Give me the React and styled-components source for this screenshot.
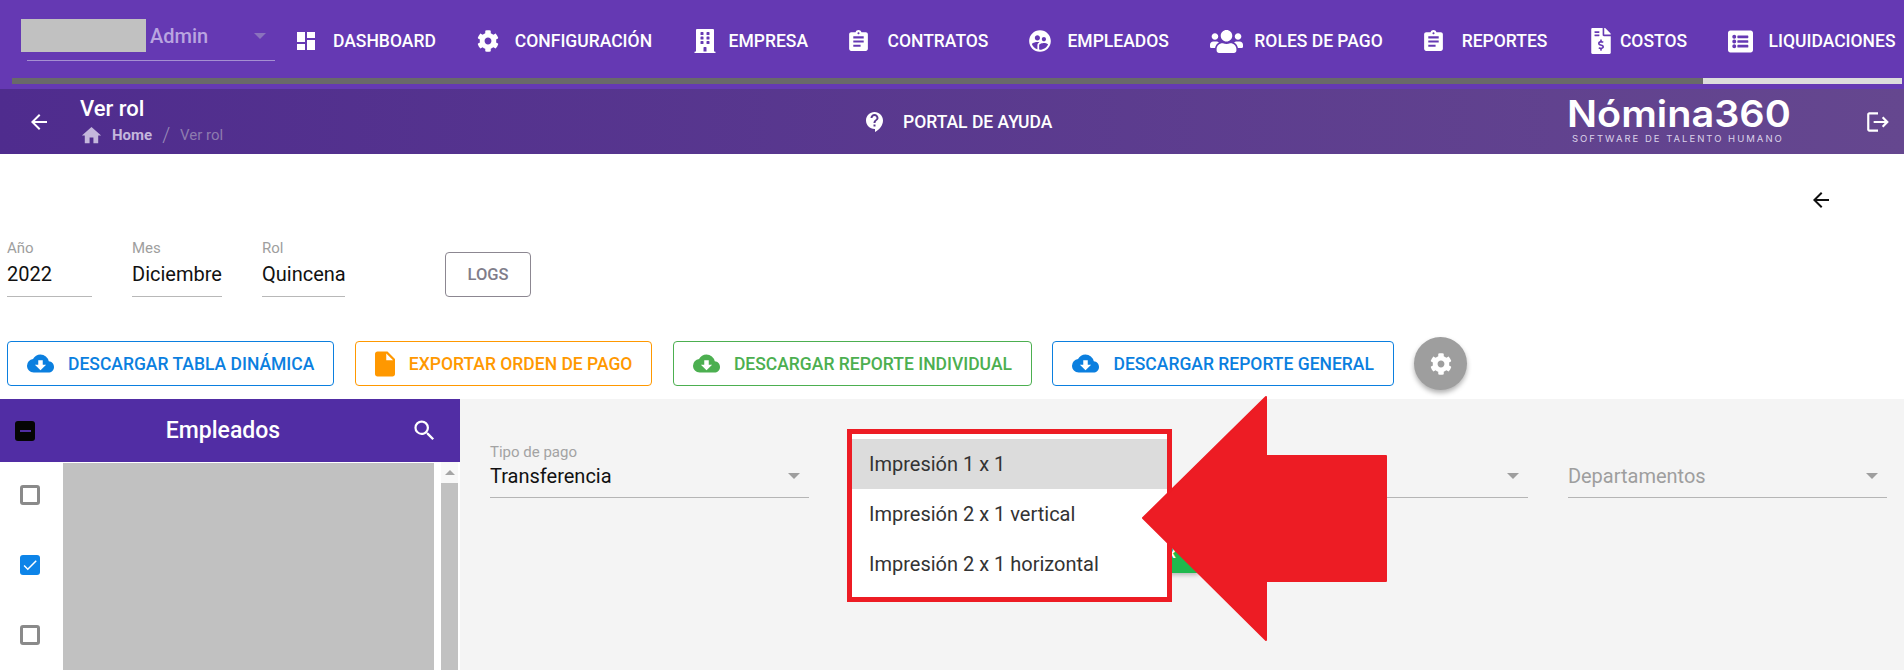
import React from 'react';
import styled, { createGlobalStyle } from 'styled-components';
import {
  MdDashboard, MdAssignment, MdSupervisedUserCircle, MdContactSupport, MdLogout,
  MdArrowBack, MdHome, MdCloudDownload, MdInsertDriveFile, MdSearch, MdCheck,
} from 'react-icons/md';
import { FaCog, FaBuilding, FaUsers, FaFileInvoiceDollar, FaListAlt } from 'react-icons/fa';

const GlobalStyle = createGlobalStyle`
  html, body { margin: 0; padding: 0; background: #fff; }
  body { font-family: Roboto, "Liberation Sans", sans-serif; overflow: hidden; }
  * { box-sizing: border-box; }
`;

const Page = styled.div`
  position: relative;
  width: 1904px;
  height: 670px;
  overflow: hidden;
  display: flex;
  flex-direction: column;
`;

// Top nav
const TopBar = styled.header`
  height: 89px;
  background: #6539b3;
  display: flex;
  flex-direction: column;
`;

const NavRow = styled.nav`
  height: 78px;
  display: flex;
  align-items: center;
  padding-top: 4px;
  white-space: nowrap;
`;

const Brand = styled.div`
  width: 296px;
  padding: 15px 0 0 21px;
  flex: none;
  align-self: flex-start;
`;

const BrandTop = styled.div`
  display: flex;
  align-items: center;
  height: 33px;
`;

const Redacted = styled.div`
  width: 125px;
  height: 33px;
  background: #c1c1c1;
`;

const AdminName = styled.span`
  margin-left: 4px;
  font-size: 20px;
  font-weight: 500;
  color: #b9a5e0;
  width: 104px;
`;

const SmallCaret = styled.span`
  width: 0;
  height: 0;
  border-left: 6px solid transparent;
  border-right: 6px solid transparent;
  border-top: 6px solid ${p => p.$color};
`;

const BrandLine = styled.div`
  margin: 8px 0 0 6px;
  width: 248px;
  height: 1px;
  background: #a58fd2;
`;

const NavItems = styled.div`
  display: flex;
  align-items: center;
  gap: 41px;
`;

const NavItem = styled.a`
  display: flex;
  align-items: center;
  color: #fff;
  font-size: 17.5px;
  font-weight: 500;
`;

const IconSlot = styled.span`
  display: flex;
  align-items: center;
  width: ${p => p.$w}px;
  flex: none;
`;

const ScrollTrack = styled.div`
  height: 6px;
  margin-left: 12px;
  margin-right: 2px;
  background: #696969;
  display: flex;
  justify-content: flex-end;
`;

const ScrollThumb = styled.div`
  width: 199px;
  background: #dcdcdc;
`;

// Sub header
const SubBar = styled.div`
  height: 65px;
  background: linear-gradient(90deg, #4f2c8e, #65478f);
  display: grid;
  grid-template-columns: 80px 785px 702px 298px 1fr;
  align-items: center;
  color: #fff;
`;

const BackCell = styled.div`
  display: flex;
  padding-left: 27px;
`;

const PageTitle = styled.div`
  font-size: 22px;
  font-weight: 500;
  line-height: 24px;
`;

const Crumbs = styled.div`
  display: flex;
  align-items: center;
  margin-top: 3px;
  font-size: 15px;
  line-height: 20px;
`;

const CrumbHome = styled.span`
  margin-left: 9px;
  font-weight: 700;
  color: #c4b7dc;
`;

const CrumbSep = styled.span`
  margin: 0 10px;
  font-size: 20px;
  font-weight: 300;
  color: #9a8bb8;
`;

const CrumbCurrent = styled.span`
  color: #8d7bae;
`;

const HelpLink = styled.div`
  display: flex;
  align-items: center;
  gap: 16px;
  margin-left: -2px;
  font-size: 17.5px;
  font-weight: 500;
`;

const Logo = styled.div`
  display: flex;
  flex-direction: column;
  margin-top: -3px;
`;

const LogoName = styled.div`
  font-family: Inter, "DejaVu Sans", sans-serif;
  font-size: 37px;
  font-weight: 600;
  line-height: 38px;
  transform: scaleX(1.07);
  transform-origin: left center;
  white-space: nowrap;
`;

const LogoTag = styled.div`
  font-family: Inter, "DejaVu Sans", sans-serif;
  font-size: 9.5px;
  letter-spacing: 2px;
  line-height: 12px;
  margin: 0 0 0 5px;
  color: #dcd3ea;
  white-space: nowrap;
`;

// White filter area
const Filters = styled.section`
  height: 245px;
  padding: 34px 0 0 7px;
  display: flex;
  flex-direction: column;
`;

const ReturnRow = styled.div`
  display: flex;
  justify-content: flex-end;
  padding-right: 71px;
  height: 53px;
  color: #111;
`;

const FieldRow = styled.div`
  display: flex;
  align-items: flex-end;
  height: 56px;
`;

const Field = styled.div`
  width: ${p => p.$w}px;
  margin-right: ${p => p.$mr}px;
  border-bottom: 1px solid #b8b8b8;
`;

const FieldLabel = styled.div`
  font-size: 15px;
  line-height: 18px;
  padding-bottom: 2px;
  color: #9e9e9e;
`;

const FieldValue = styled.div`
  font-size: 20px;
  line-height: 30px;
  padding-bottom: 7px;
  color: #111;
  white-space: nowrap;
`;

const LogsButton = styled.button`
  width: 86px;
  height: 45px;
  background: #fff;
  border: 1px solid #8c8791;
  border-radius: 4px;
  font-family: inherit;
  font-size: 16.5px;
  font-weight: 500;
  color: #807d8a;
`;

const ActionRow = styled.div`
  display: flex;
  align-items: center;
  gap: 20.5px;
  margin-top: 40px;
`;

const ActionButton = styled.button`
  height: 45px;
  display: flex;
  align-items: center;
  gap: 14px;
  padding: 0 19px;
  background: #fff;
  border: 1px solid ${p => p.$color};
  border-radius: 4px;
  color: ${p => p.$color};
  font-family: inherit;
  font-size: 17.5px;
  font-weight: 500;
  white-space: nowrap;
`;

const FileGlyph = styled(MdInsertDriveFile)`
  margin: 0 -5px;
`;

const GearFab = styled.button`
  width: 53px;
  height: 53px;
  border: 0;
  border-radius: 50%;
  background: #9e9e9e;
  color: #fff;
  display: flex;
  align-items: center;
  justify-content: center;
  box-shadow: 0 3px 5px rgba(0, 0, 0, 0.3);
`;

// Lower split
const Split = styled.div`
  flex: 1;
  display: flex;
  min-height: 0;
`;

const Sidebar = styled.aside`
  width: 460px;
  flex: none;
  display: flex;
  flex-direction: column;
  background: #fff;
`;

const SideHead = styled.div`
  height: 63px;
  background: #512da4;
  color: #fff;
  display: flex;
  align-items: center;
  justify-content: space-between;
  padding: 0 22px 0 15px;
`;

const HeadCheck = styled.span`
  width: 20px;
  height: 20px;
  border-radius: 3px;
  background: #050505;
  display: flex;
  align-items: center;
  justify-content: center;

  &::after {
    content: '';
    width: 11px;
    height: 2px;
    background: #512da4;
  }
`;

const SideTitle = styled.div`
  font-size: 23px;
  font-weight: 500;
`;

const SideBody = styled.div`
  flex: 1;
  display: flex;
  min-height: 0;
`;

const CheckColumn = styled.div`
  width: 63px;
  flex: none;
  padding: 23px 0 0 20px;
  display: flex;
  flex-direction: column;
  gap: 50px;
`;

const Check = styled.span`
  width: 20px;
  height: 20px;
  flex: none;
  border-radius: 3px;
  border: ${p => (p.$on ? '0' : '3px solid #8a8a8a')};
  background: ${p => (p.$on ? '#0d84e8' : '#fff')};
  color: #fff;
  display: flex;
  align-items: center;
  justify-content: center;
`;

const RedactedList = styled.div`
  width: 371px;
  margin-top: 1px;
  background: #c1c1c1;
`;

const VScroll = styled.div`
  width: 17px;
  margin-left: 7px;
  display: flex;
  flex-direction: column;
  background: #f8f8f8;
`;

const VArrow = styled.div`
  height: 21px;
  display: flex;
  align-items: center;
  justify-content: center;
`;

const UpCaret = styled.span`
  width: 0;
  height: 0;
  border-left: 5px solid transparent;
  border-right: 5px solid transparent;
  border-bottom: 5px solid #a6a6a6;
`;

const VThumb = styled.div`
  flex: 1;
  background: #c1c1c1;
`;

const Content = styled.main`
  flex: 1;
  background: #f4f4f4;
  padding: 40px 17px 0 30px;
`;

const SelectGrid = styled.div`
  display: grid;
  grid-template-columns: repeat(4, 319px);
  column-gap: 40.3px;
`;

const SelectField = styled.div`
  height: 59px;
  display: flex;
  flex-direction: column;
  justify-content: flex-end;
  border-bottom: 1px solid #b5b5b5;
`;

const SelectLabel = styled.div`
  font-size: 15px;
  line-height: 18px;
  color: #a3a3a3;
`;

const SelectBody = styled.div`
  display: flex;
  align-items: center;
  justify-content: space-between;
  height: 30px;
  margin-bottom: 6px;
  padding-right: 9px;
`;

const SelectText = styled.span`
  font-size: 20px;
  color: ${p => (p.$muted ? '#9e9e9e' : '#111')};
`;

const SubmitRow = styled.div`
  display: flex;
  justify-content: flex-end;
  width: 710px;
  margin-top: 32px;
`;

const SubmitButton = styled.button`
  height: 43px;
  padding: 0 24px;
  border: 0;
  border-radius: 4px;
  background: #1fb84d;
  color: #fff;
  font-family: inherit;
  font-size: 17px;
  font-weight: 500;
  box-shadow: 0 2px 4px rgba(0, 0, 0, 0.25);
`;

// Open dropdown, with the red frame drawn round it in the screenshot
const MenuFrame = styled.div`
  position: absolute;
  left: 847px;
  top: 429px;
  width: 325px;
  height: 173px;
  border: 5px solid #ed1c24;
  background: #fff;
  padding-top: 5px;
`;

const MenuItem = styled.div`
  height: 50px;
  padding-left: 17px;
  display: flex;
  align-items: center;
  font-size: 20px;
  color: #333;
  background: ${p => (p.$active ? '#dcdcdc' : 'transparent')};
`;

const RedArrow = styled.svg`
  position: absolute;
  left: 1140px;
  top: 394px;
`;

const navLinks = [
  { label: 'DASHBOARD', slot: 37, icon: <MdDashboard size={24} style={{ marginLeft: -2 }} /> },
  { label: 'CONFIGURACIÓN', slot: 38, icon: <FaCog size={22} /> },
  { label: 'EMPRESA', slot: 35.5, icon: <FaBuilding size={24} /> },
  { label: 'CONTRATOS', slot: 38.5, icon: <MdAssignment size={25} style={{ marginLeft: -3 }} /> },
  { label: 'EMPLEADOS', slot: 38, icon: <MdSupervisedUserCircle size={26} style={{ marginLeft: -2 }} /> },
  { label: 'ROLES DE PAGO', slot: 44.5, icon: <FaUsers size={33} /> },
  { label: 'REPORTES', slot: 38, icon: <MdAssignment size={25} style={{ marginLeft: -3 }} /> },
  { label: 'COSTOS', slot: 31.5, icon: <FaFileInvoiceDollar size={26} /> },
  { label: 'LIQUIDACIONES', slot: 40.5, icon: <FaListAlt size={25} /> },
];

const actions = [
  { label: 'DESCARGAR TABLA DINÁMICA', color: '#0b7fdf', Icon: MdCloudDownload, size: 27 },
  { label: 'EXPORTAR ORDEN DE PAGO', color: '#ff9800', Icon: FileGlyph, size: 30 },
  { label: 'DESCARGAR REPORTE INDIVIDUAL', color: '#4caf50', Icon: MdCloudDownload, size: 27 },
  { label: 'DESCARGAR REPORTE GENERAL', color: '#0b7fdf', Icon: MdCloudDownload, size: 27 },
];

export default function App() {
  return (
    <Page>
      <GlobalStyle />
      <TopBar>
        <NavRow>
          <Brand>
            <BrandTop>
              <Redacted />
              <AdminName>Admin</AdminName>
              <SmallCaret $color="#8a72bd" />
            </BrandTop>
            <BrandLine />
          </Brand>
          <NavItems>
            {navLinks.map(link => (
              <NavItem key={link.label}>
                <IconSlot $w={link.slot}>{link.icon}</IconSlot>
                {link.label}
              </NavItem>
            ))}
          </NavItems>
        </NavRow>
        <ScrollTrack>
          <ScrollThumb />
        </ScrollTrack>
      </TopBar>

      <SubBar>
        <BackCell>
          <MdArrowBack size={24} />
        </BackCell>
        <div>
          <PageTitle>Ver rol</PageTitle>
          <Crumbs>
            <MdHome size={23} color="#c4b7dc" />
            <CrumbHome>Home</CrumbHome>
            <CrumbSep>/</CrumbSep>
            <CrumbCurrent>Ver rol</CrumbCurrent>
          </Crumbs>
        </div>
        <HelpLink>
          <MdContactSupport size={24} />
          PORTAL DE AYUDA
        </HelpLink>
        <Logo>
          <LogoName>Nómina360</LogoName>
          <LogoTag>SOFTWARE DE TALENTO HUMANO</LogoTag>
        </Logo>
        <MdLogout size={26} />
      </SubBar>

      <Filters>
        <ReturnRow>
          <MdArrowBack size={24} />
        </ReturnRow>
        <FieldRow>
          <Field $w={85} $mr={40}>
            <FieldLabel>Año</FieldLabel>
            <FieldValue>2022</FieldValue>
          </Field>
          <Field $w={90} $mr={40}>
            <FieldLabel>Mes</FieldLabel>
            <FieldValue>Diciembre</FieldValue>
          </Field>
          <Field $w={83} $mr={100}>
            <FieldLabel>Rol</FieldLabel>
            <FieldValue>Quincena</FieldValue>
          </Field>
          <LogsButton>LOGS</LogsButton>
        </FieldRow>
        <ActionRow>
          {actions.map(({ label, color, Icon, size }) => (
            <ActionButton key={label} $color={color}>
              <Icon size={size} />
              {label}
            </ActionButton>
          ))}
          <GearFab>
            <FaCog size={22} />
          </GearFab>
        </ActionRow>
      </Filters>

      <Split>
        <Sidebar>
          <SideHead>
            <HeadCheck />
            <SideTitle>Empleados</SideTitle>
            <MdSearch size={27} />
          </SideHead>
          <SideBody>
            <CheckColumn>
              <Check />
              <Check $on>
                <MdCheck size={18} />
              </Check>
              <Check />
            </CheckColumn>
            <RedactedList />
            <VScroll>
              <VArrow>
                <UpCaret />
              </VArrow>
              <VThumb />
            </VScroll>
          </SideBody>
        </Sidebar>
        <Content>
          <SelectGrid>
            <SelectField>
              <SelectLabel>Tipo de pago</SelectLabel>
              <SelectBody>
                <SelectText>Transferencia</SelectText>
                <SmallCaret $color="#9e9e9e" />
              </SelectBody>
            </SelectField>
            <SelectField />
            <SelectField>
              <SelectBody>
                <span />
                <SmallCaret $color="#9e9e9e" />
              </SelectBody>
            </SelectField>
            <SelectField>
              <SelectBody>
                <SelectText $muted>Departamentos</SelectText>
                <SmallCaret $color="#9e9e9e" />
              </SelectBody>
            </SelectField>
          </SelectGrid>
          <SubmitRow>
            <SubmitButton>IMPRIMIR</SubmitButton>
          </SubmitRow>
        </Content>
      </Split>

      <MenuFrame>
        <MenuItem $active>Impresión 1 x 1</MenuItem>
        <MenuItem>Impresión 2 x 1 vertical</MenuItem>
        <MenuItem>Impresión 2 x 1 horizontal</MenuItem>
      </MenuFrame>

      <RedArrow width="250" height="250" viewBox="0 0 250 250">
        <polygon
          points="3,124 126,3 126,62 246,62 246,187 126,187 126,246"
          fill="#ed1c24"
          stroke="#ed1c24"
          strokeWidth="2"
          strokeLinejoin="round"
        />
      </RedArrow>
    </Page>
  );
}
